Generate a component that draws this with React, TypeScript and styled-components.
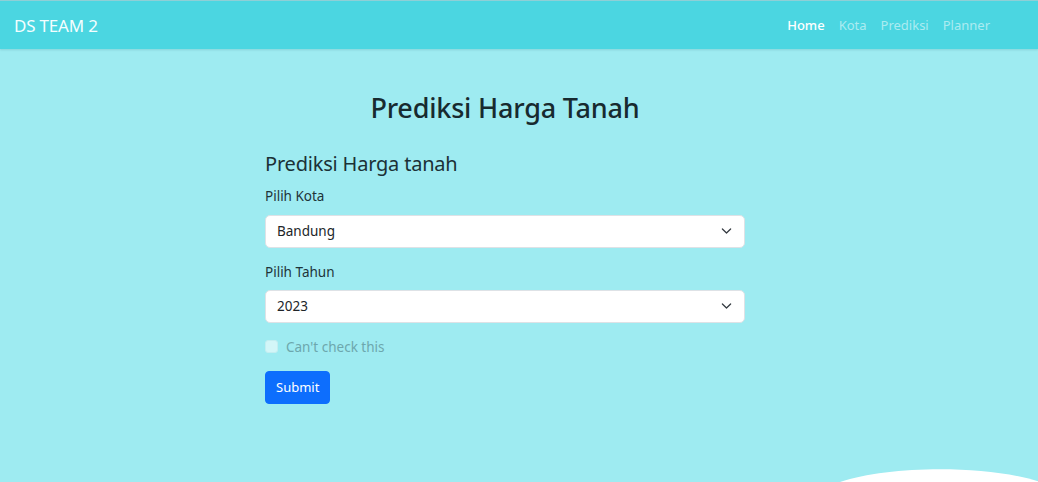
import React from "react";
import styled, { createGlobalStyle } from "styled-components";

const Global = createGlobalStyle`
  html, body { margin: 0; padding: 0; }
  body {
    background: #9eebf1;
    font-family: "Noto Sans", "Open Sans", sans-serif;
    color: #1d3338;
    overflow: hidden;
  }
  * { box-sizing: border-box; }
`;

const Page = styled.div`
  position: relative;
  min-height: 482px;
  height: 482px;
  overflow: hidden;
`;

const NavBar = styled.nav`
  height: 49px;
  background: #4bd6e1;
  border-top: 1px solid #8fcfd6;
  display: flex;
  align-items: center;
  justify-content: space-between;
  padding: 0 48px 0 14px;
  box-shadow: 0 1px 2px rgba(0, 80, 90, 0.15);
`;

const Brand = styled.a`
  color: #f4feff;
  font-size: 17px;
  text-decoration: none;
  letter-spacing: -0.2px;
`;

const NavLinks = styled.div`
  display: flex;
  gap: 14px;
`;

const NavLink = styled.a<{ $active?: boolean }>`
  font-size: 13px;
  text-decoration: none;
  color: ${(p) => (p.$active ? "#ffffff" : "rgba(255,255,255,0.55)")};
  font-weight: ${(p) => (p.$active ? 500 : 400)};
`;

const Main = styled.main`
  display: flex;
  flex-direction: column;
  align-items: center;
  padding: 43px 28px 0 0;
`;

const Title = styled.h2`
  margin: 0 0 28px;
  font-size: 27px;
  font-weight: 500;
  line-height: 1.2;
  color: #172a2f;
  letter-spacing: -0.2px;
`;

const Form = styled.form`
  width: 480px;
  display: flex;
  flex-direction: column;
`;

const SubTitle = styled.h4`
  margin: 0 0 10px;
  font-size: 20px;
  font-weight: 400;
  line-height: 1.2;
  color: #1b3136;
  letter-spacing: -0.2px;
`;

const Field = styled.div`
  display: flex;
  flex-direction: column;
  margin-bottom: 14px;
`;

const Label = styled.label`
  font-size: 13.5px;
  line-height: 1.5;
  margin-bottom: 8px;
  color: #1e3439;
`;

const SelectWrap = styled.div`
  position: relative;
  height: 33px;
  background: #ffffff;
  border: 1px solid #dee2e6;
  border-radius: 5px;
  display: flex;
  align-items: center;
  padding: 0 11px;
`;

const Select = styled.select`
  appearance: none;
  border: none;
  background: transparent;
  width: 100%;
  height: 100%;
  font-family: inherit;
  font-size: 13.5px;
  color: #212529;
  padding: 0;
  outline: none;
`;

const Chevron = styled.svg`
  position: absolute;
  right: 12px;
  top: 50%;
  transform: translateY(-50%);
  pointer-events: none;
`;

const CheckRow = styled.div`
  display: flex;
  align-items: center;
  gap: 8px;
  margin: 1px 0 15px;
`;

const CheckBox = styled.span`
  width: 13px;
  height: 13px;
  border-radius: 3px;
  background: #d3f6f8;
  border: 1px solid #c4eef1;
`;

const CheckLabel = styled.span`
  font-size: 13.5px;
  color: #6da7ad;
`;

const Button = styled.button`
  align-self: flex-start;
  height: 33px;
  padding: 0 10px;
  background: #0d6efd;
  color: #ffffff;
  border: 1px solid #0d6efd;
  border-radius: 4px;
  font-family: inherit;
  font-size: 13px;
`;

const Wave = styled.svg`
  position: absolute;
  left: 0;
  bottom: 0;
  width: 1038px;
  height: 30px;
`;

function ChevronIcon() {
  return (
    <Chevron width="11" height="11" viewBox="0 0 16 16">
      <path
        d="M2 5l6 6 6-6"
        fill="none"
        stroke="#343a40"
        strokeWidth="1.8"
        strokeLinecap="round"
        strokeLinejoin="round"
      />
    </Chevron>
  );
}

export default function App() {
  return (
    <Page>
      <Global />
      <NavBar>
        <Brand href="#">DS TEAM 2</Brand>
        <NavLinks>
          <NavLink $active href="#">Home</NavLink>
          <NavLink href="#">Kota</NavLink>
          <NavLink href="#">Prediksi</NavLink>
          <NavLink href="#">Planner</NavLink>
        </NavLinks>
      </NavBar>
      <Main>
        <Title>Prediksi Harga Tanah</Title>
        <Form onSubmit={(e) => e.preventDefault()}>
          <SubTitle>Prediksi Harga tanah</SubTitle>
          <Field>
            <Label>Pilih Kota</Label>
            <SelectWrap>
              <Select defaultValue="Bandung">
                <option>Bandung</option>
              </Select>
              <ChevronIcon />
            </SelectWrap>
          </Field>
          <Field>
            <Label>Pilih Tahun</Label>
            <SelectWrap>
              <Select defaultValue="2023">
                <option>2023</option>
              </Select>
              <ChevronIcon />
            </SelectWrap>
          </Field>
          <CheckRow>
            <CheckBox />
            <CheckLabel>Can't check this</CheckLabel>
          </CheckRow>
          <Button type="submit">Submit</Button>
        </Form>
      </Main>
      <Wave viewBox="0 0 1038 30" preserveAspectRatio="none">
        <path d="M840 30 C 890 13, 990 13, 1040 30 Z" fill="#ffffff" />
      </Wave>
    </Page>
  );
}
